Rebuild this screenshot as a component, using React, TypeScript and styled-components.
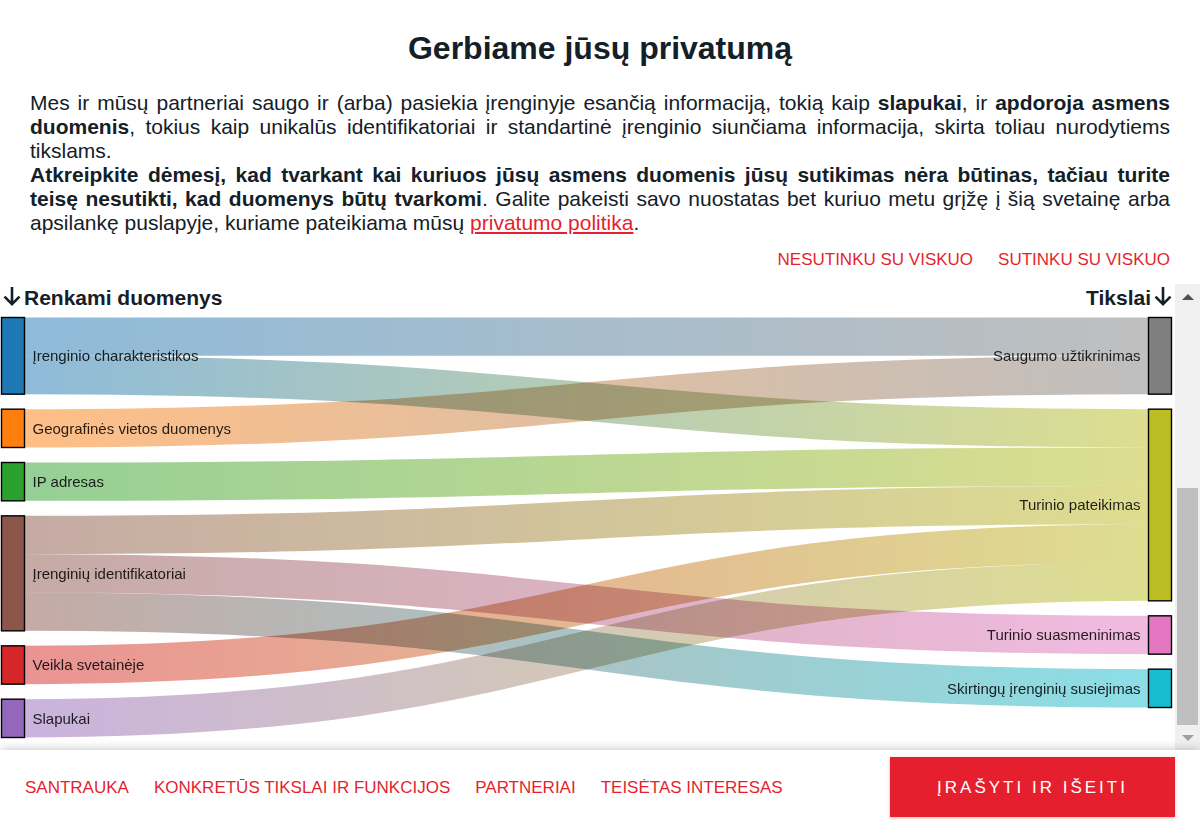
import React, { useLayoutEffect, useRef, useState } from "react";
import styled, { createGlobalStyle } from "styled-components";

const GlobalStyle = createGlobalStyle`
  *, *::before, *::after { box-sizing: border-box; }
  body {
    margin: 0;
    background: #fff;
    color: #142027;
    font-family: "Liberation Sans", Arial, sans-serif;
  }
`;

const Dialog = styled.main`
  display: flex;
  flex-direction: column;
  height: 100vh;
  min-height: 640px;
  background: #fff;
`;

const Header = styled.header`
  padding: 30px 30px 0;
`;

const Title = styled.h1`
  margin: 0;
  font-size: 32px;
  line-height: 36px;
  text-align: center;
`;

const Intro = styled.div`
  margin-top: 25px;
  font-size: 21px;
  line-height: 24px;
  text-align: justify;

  p { margin: 0; }
  a { color: #e61f2e; }
`;

const BulkActions = styled.div`
  display: flex;
  justify-content: flex-end;
  gap: 25px;
  margin-top: 13px;
`;

const TextButton = styled.button`
  padding: 2px 0 0;
  border: 0;
  background: none;
  color: #e61f2e;
  font-family: inherit;
  font-size: 17px;
  line-height: 20px;
  text-transform: uppercase;
  white-space: nowrap;
  cursor: pointer;
`;

const Body = styled.section`
  display: flex;
  flex: 1;
  min-height: 0;
  margin-top: 14px;
`;

const Viewport = styled.div`
  flex: 1;
  min-width: 0;
  overflow: hidden;
`;

const ColumnTitles = styled.div`
  display: flex;
  justify-content: space-between;
  padding: 0 3px;
`;

const ColumnTitle = styled.h2`
  display: flex;
  align-items: center;
  gap: 3px;
  margin: 0;
  font-size: 21px;
  line-height: 28px;
`;

const ArrowSvg = styled.svg`
  display: block;
  width: 18px;
  height: 22px;
  fill: none;
  stroke: currentColor;
  stroke-width: 2.6;
`;

const Chart = styled.svg`
  display: block;
  width: 100%;
  height: 430px;
  margin-top: 4px;
  isolation: isolate;
`;

const Ribbon = styled.path`
  fill: none;
  stroke-opacity: 0.5;
  mix-blend-mode: multiply;
`;

const NodeLabel = styled.text`
  fill: #000;
  font-size: 15px;
  fill-opacity: 0.85;
`;

const Scrollbar = styled.div`
  display: flex;
  flex-direction: column;
  width: 25px;
  background: #f0f0f0;
`;

const ScrollStep = styled.button<{ $color: string }>`
  display: flex;
  align-items: center;
  justify-content: center;
  height: 25px;
  padding: 0;
  border: 0;
  background: none;
  color: ${(p) => p.$color};
`;

const Track = styled.div`
  display: flex;
  flex: 1;
  flex-direction: column;
  justify-content: flex-end;
  padding: 0 2px;
`;

const Thumb = styled.div`
  height: 57%;
  background: #bfbfbf;
`;

const Footer = styled.footer`
  position: relative;
  display: flex;
  align-items: center;
  justify-content: space-between;
  padding: 7px 25px 8px;
  background: #fff;
  box-shadow: 0 0 10px rgba(0, 0, 0, 0.25);
`;

const Tabs = styled.nav`
  display: flex;
  gap: 25px;
`;

const SaveButton = styled.button`
  width: 285px;
  height: 60px;
  padding: 2px 0 0;
  border: 0;
  background: #e61f2e;
  color: #fff;
  box-shadow: 0 1px 3px rgba(0, 0, 0, 0.25);
  font-family: inherit;
  font-size: 17px;
  letter-spacing: 3px;
  text-transform: uppercase;
  cursor: pointer;
`;

type SankeyNode = { id: string; label: string; color: string; units: number };

const sources: SankeyNode[] = [
  { id: "device", label: "Įrenginio charakteristikos", color: "#1f77b4", units: 2 },
  { id: "geo", label: "Geografinės vietos duomenys", color: "#ff7f0e", units: 1 },
  { id: "ip", label: "IP adresas", color: "#2ca02c", units: 1 },
  { id: "ids", label: "Įrenginių identifikatoriai", color: "#8c564b", units: 3 },
  { id: "activity", label: "Veikla svetainėje", color: "#d62728", units: 1 },
  { id: "cookies", label: "Slapukai", color: "#9467bd", units: 1 },
];

const purposes: SankeyNode[] = [
  { id: "security", label: "Saugumo užtikrinimas", color: "#7f7f7f", units: 2 },
  { id: "content", label: "Turinio pateikimas", color: "#bcbd22", units: 5 },
  { id: "personal", label: "Turinio suasmeninimas", color: "#e377c2", units: 1 },
  { id: "linking", label: "Skirtingų įrenginių susiejimas", color: "#17becf", units: 1 },
];

const links: [string, string][] = [
  ["device", "security"],
  ["device", "content"],
  ["geo", "security"],
  ["ip", "content"],
  ["ids", "content"],
  ["ids", "personal"],
  ["ids", "linking"],
  ["activity", "content"],
  ["cookies", "content"],
];

const CHART_HEIGHT = 420;
const NODE_GAP = 15;
const NODE_WIDTH = 23;
const UNIT = (CHART_HEIGHT - NODE_GAP * (sources.length - 1)) / links.length;

function place(nodes: SankeyNode[]) {
  let y = 1.5;
  return nodes.map((node) => {
    const placed = { ...node, y, height: node.units * UNIT };
    y += placed.height + NODE_GAP;
    return placed;
  });
}

function Sankey() {
  const ref = useRef<SVGSVGElement>(null);
  const [width, setWidth] = useState(1175);

  useLayoutEffect(() => {
    const svg = ref.current;
    if (!svg) return;
    const measure = () => setWidth(Math.round(svg.getBoundingClientRect().width));
    measure();
    const observer = new ResizeObserver(measure);
    observer.observe(svg);
    return () => observer.disconnect();
  }, []);

  const left = place(sources);
  const right = place(purposes);
  const leftX = 1.5;
  const rightX = width - 3.5 - NODE_WIDTH;
  const startX = leftX + NODE_WIDTH;
  const midX = (startX + rightX) / 2;
  const used: Record<string, number> = {};
  const nextCentre = (nodes: ReturnType<typeof place>, id: string) => {
    const node = nodes.find((n) => n.id === id)!;
    const index = used[id] ?? 0;
    used[id] = index + 1;
    return { color: node.color, y: node.y + UNIT * (index + 0.5) };
  };

  const ribbons = links.map(([from, to]) => ({
    id: `${from}-${to}`,
    from: nextCentre(left, from),
    to: nextCentre(right, to),
  }));

  return (
    <Chart ref={ref} role="img" aria-label="Renkami duomenys ir tikslai">
      <defs>
        {ribbons.map((r) => (
          <linearGradient key={r.id} id={r.id} gradientUnits="userSpaceOnUse" x1={startX} x2={rightX}>
            <stop offset="0" stopColor={r.from.color} />
            <stop offset="1" stopColor={r.to.color} />
          </linearGradient>
        ))}
      </defs>
      {[...left.map((n) => ({ ...n, x: leftX })), ...right.map((n) => ({ ...n, x: rightX }))].map((n) => (
        <rect
          key={n.id}
          x={n.x}
          y={n.y}
          width={NODE_WIDTH}
          height={n.height}
          fill={n.color}
          stroke="#000"
          strokeWidth={1.4}
        />
      ))}
      {ribbons.map((r) => (
        <Ribbon
          key={r.id}
          d={`M${startX},${r.from.y}C${midX},${r.from.y} ${midX},${r.to.y} ${rightX},${r.to.y}`}
          stroke={`url(#${r.id})`}
          strokeWidth={UNIT}
        />
      ))}
      {left.map((n) => (
        <NodeLabel key={n.id} x={startX + 8} y={n.y + n.height / 2} dy="0.35em">
          {n.label}
        </NodeLabel>
      ))}
      {right.map((n) => (
        <NodeLabel key={n.id} x={rightX - 8} y={n.y + n.height / 2} dy="0.35em" textAnchor="end">
          {n.label}
        </NodeLabel>
      ))}
    </Chart>
  );
}

function DownArrow() {
  return (
    <ArrowSvg viewBox="0 0 18 22" aria-hidden="true">
      <path d="M9 -1V17M1.500 9.700L9 17.200L16.500 9.700" />
    </ArrowSvg>
  );
}

const tabs = ["Santrauka", "Konkretūs tikslai ir funkcijos", "Partneriai", "Teisėtas interesas"];

export default function App() {
  return (
    <>
      <GlobalStyle />
      <Dialog>
        <Header>
          <Title>Gerbiame jūsų privatumą</Title>
          <Intro>
            <p>
              Mes ir mūsų partneriai saugo ir (arba) pasiekia įrenginyje esančią informaciją, tokią kaip{" "}
              <b>slapukai</b>, ir <b>apdoroja asmens duomenis</b>, tokius kaip unikalūs identifikatoriai ir standartinė
              įrenginio siunčiama informacija, skirta toliau nurodytiems tikslams.
            </p>
            <p>
              <b>
                Atkreipkite dėmesį, kad tvarkant kai kuriuos jūsų asmens duomenis jūsų sutikimas nėra būtinas, tačiau
                turite teisę nesutikti, kad duomenys būtų tvarkomi
              </b>
              . Galite pakeisti savo nuostatas bet kuriuo metu grįžę į šią svetainę arba apsilankę puslapyje, kuriame
              pateikiama mūsų <a href="#privatumas">privatumo politika</a>.
            </p>
          </Intro>
          <BulkActions>
            <TextButton type="button">Nesutinku su viskuo</TextButton>
            <TextButton type="button">Sutinku su viskuo</TextButton>
          </BulkActions>
        </Header>
        <Body>
          <Viewport>
            <ColumnTitles>
              <ColumnTitle>
                <DownArrow />
                Renkami duomenys
              </ColumnTitle>
              <ColumnTitle>
                Tikslai
                <DownArrow />
              </ColumnTitle>
            </ColumnTitles>
            <Sankey />
          </Viewport>
          <Scrollbar>
            <ScrollStep type="button" aria-label="Slinkti aukštyn" $color="#505050">
              <svg width="12" height="6" viewBox="0 0 12 6">
                <path d="M0 6L6 0L12 6Z" fill="currentColor" />
              </svg>
            </ScrollStep>
            <Track>
              <Thumb />
            </Track>
            <ScrollStep type="button" aria-label="Slinkti žemyn" $color="#a0a0a0">
              <svg width="12" height="6" viewBox="0 0 12 6">
                <path d="M0 0H12L6 6Z" fill="currentColor" />
              </svg>
            </ScrollStep>
          </Scrollbar>
        </Body>
        <Footer>
          <Tabs>
            {tabs.map((tab) => (
              <TextButton key={tab} type="button">
                {tab}
              </TextButton>
            ))}
          </Tabs>
          <SaveButton type="button">Įrašyti ir išeiti</SaveButton>
        </Footer>
      </Dialog>
    </>
  );
}
